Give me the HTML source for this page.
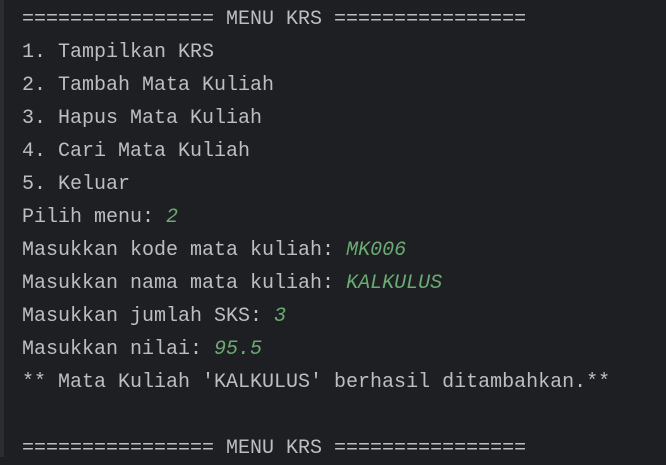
<!DOCTYPE html>
<html><head><meta charset="utf-8"><style>
html,body{margin:0;padding:0;}
body{width:666px;height:457px;background:#1e1f22;overflow:hidden;position:relative;}
.strip{position:absolute;left:0;top:0;width:4px;height:457px;background:#2b2d30;}
pre{margin:0;position:absolute;left:22px;top:3px;font-family:"Liberation Mono",monospace;font-size:20px;line-height:33px;color:#bcbec4;}
.g{color:#6aab73;font-style:italic;}
</style></head><body>
<div class="strip"></div>
<pre>================ MENU KRS ================
1. Tampilkan KRS
2. Tambah Mata Kuliah
3. Hapus Mata Kuliah
4. Cari Mata Kuliah
5. Keluar
Pilih menu: <span class="g">2</span>
Masukkan kode mata kuliah: <span class="g">MK006</span>
Masukkan nama mata kuliah: <span class="g">KALKULUS</span>
Masukkan jumlah SKS: <span class="g">3</span>
Masukkan nilai: <span class="g">95.5</span>
** Mata Kuliah 'KALKULUS' berhasil ditambahkan.**

================ MENU KRS ================</pre>
</body></html>
